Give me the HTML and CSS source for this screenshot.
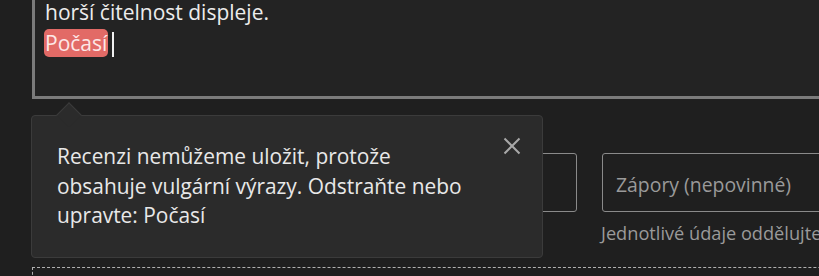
FILE: index.html
```html
<!DOCTYPE html>
<html lang="cs">
<head>
<meta charset="utf-8">
<link rel="stylesheet" href="styles.css">
</head>
<body>
<div class="page">
  <div class="review">
    <div class="editor">
      <div class="editor-text">
        <p class="line">horší čitelnost displeje.</p>
        <p class="line"><span class="bad">Počasí</span><span class="caret"></span></p>
      </div>
    </div>
    <div class="tooltip">
      <p class="tip-text">Recenzi nemůžeme uložit, protože obsahuje vulgární výrazy. Odstraňte nebo upravte: Počasí</p>
      <button class="close" aria-label="Zavřít">
        <svg width="18" height="18" viewBox="0 0 18 18"><path d="M1.5 1.5 L16.5 16.5 M16.5 1.5 L1.5 16.5" stroke="#a8a8a8" stroke-width="2" fill="none"/></svg>
      </button>
    </div>
  </div>
  <div class="fields">
    <div class="field">
      <div class="input"></div>
    </div>
    <div class="field">
      <div class="input"><span class="ph">Zápory (nepovinné)</span></div>
      <div class="help">Jednotlivé údaje oddělujte čárkou</div>
    </div>
  </div>
  <div class="dropzone"></div>
</div>
</body>
</html>
```
FILE: styles.css
```css
html, body {
  margin: 0;
  padding: 0;
  background: #1f1f1f;
  overflow: hidden;
}
body {
  font-family: "Open Sans", "Noto Sans", sans-serif;
  color: #e6e6e6;
}
.page {
  padding-left: 32px;
  width: 1120px;
}
.review {
  position: relative;
}
.editor {
  background: #232323;
  border: 3px solid #7b7b7b;
  border-top: none;
  height: 99px;
  box-sizing: border-box;
  padding: 0 10px;
  overflow: hidden;
}
.editor-text {
  margin-top: -3px;
}
.line {
  margin: 0;
  font-size: 21px;
  line-height: 31px;
  color: #ececec;
}
.bad {
  background: #e26a66;
  color: #fde7e6;
  border-radius: 5px;
  padding: 0 1px;
  margin-left: -1px;
}
.caret {
  display: inline-block;
  width: 2px;
  height: 25px;
  background: #f0f0f0;
  margin-left: 4px;
  vertical-align: -6px;
}
.tooltip {
  position: absolute;
  left: -1px;
  top: 115px;
  width: 512px;
  height: 143px;
  box-sizing: border-box;
  background: #2b2b2b;
  border: 1px solid #3b3b3b;
  border-radius: 4px;
  padding: 26px 70px 0 25px;
  z-index: 2;
}
.tooltip::before {
  content: "";
  position: absolute;
  left: 28px;
  top: -10px;
  width: 17px;
  height: 17px;
  background: #2b2b2b;
  border-left: 1px solid #3b3b3b;
  border-top: 1px solid #3b3b3b;
  transform: rotate(45deg);
}
.tip-text {
  margin: 0;
  font-size: 20.9px;
  line-height: 29.5px;
  color: #e8e8e8;
  position: relative;
}
.close {
  position: absolute;
  right: 21px;
  top: 21px;
  background: none;
  border: 0;
  padding: 0;
  width: 18px;
  height: 18px;
}
.close svg { display: block; }
.fields {
  display: grid;
  grid-template-columns: 545px 545px;
  column-gap: 25px;
  margin-top: 54px;
}
.input {
  height: 59px;
  box-sizing: border-box;
  border: 1px solid #8a8a8a;
  border-radius: 3px;
  padding: 4px 13px 0;
  display: flex;
  align-items: center;
  font-size: 19.4px;
  color: #9a9a9a;
}
.help {
  font-size: 18.2px;
  line-height: 24px;
  margin-top: 9px;
  color: #9a9a9a;
  white-space: nowrap;
  margin-left: -1px;
}
.dropzone {
  margin-top: 22px;
  height: 60px;
  border: 1px dashed #b0b0b0;
  border-right: none;
  border-bottom: none;
}
```
